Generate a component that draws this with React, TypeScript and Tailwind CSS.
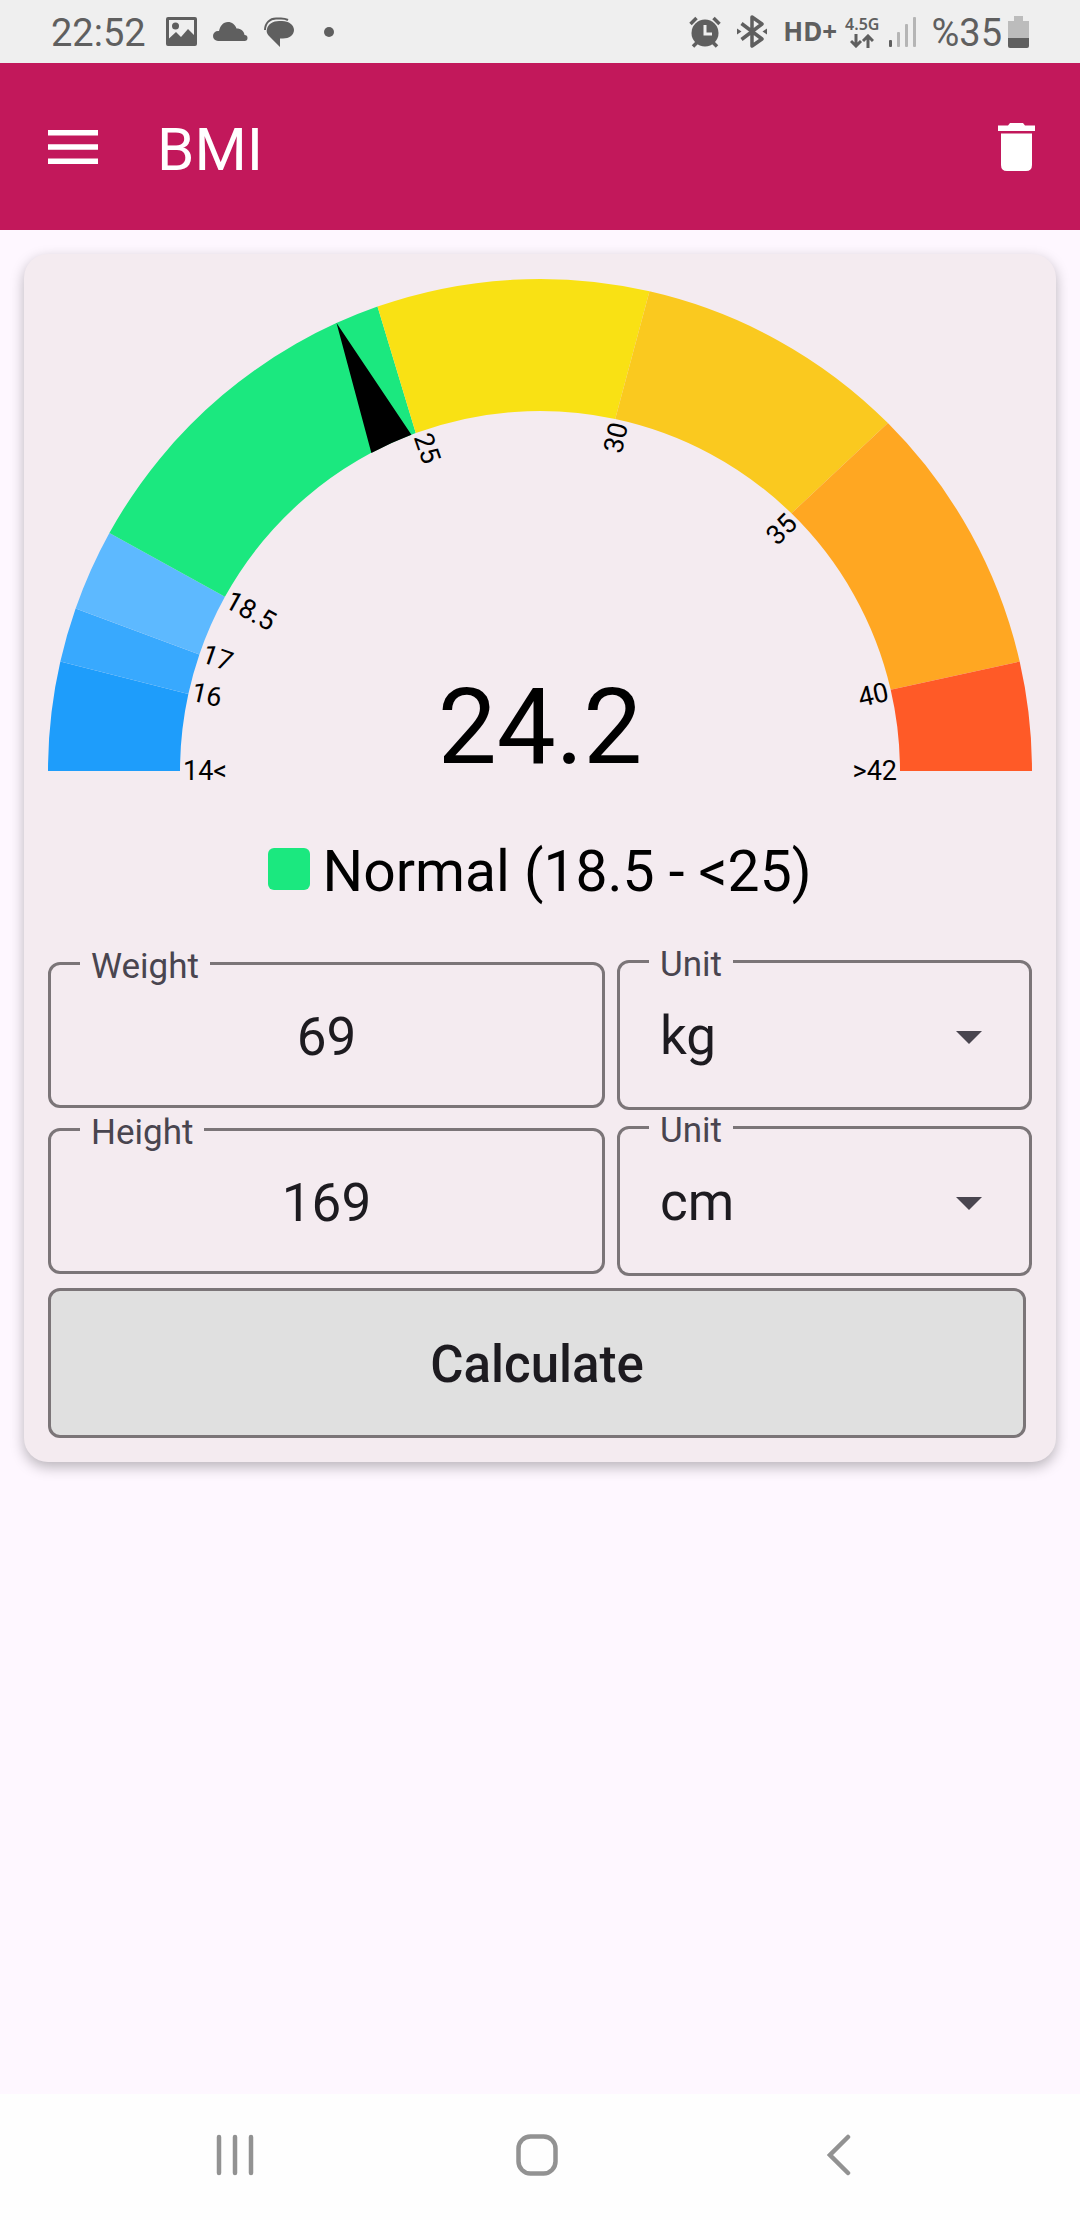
import { useState } from 'react';

// skew: how far the inner end of the segment's closing edge lags behind, in degrees
const segments = [
  { from: 14, to: 16, color: '#1e9dfb', skew: 0.5 },
  { from: 16, to: 17, color: '#38a9fe', skew: 0.4 },
  { from: 17, to: 18.5, color: '#5db9ff', skew: 0 },
  { from: 18.5, to: 25, color: '#1be87f', skew: 0.9 },
  { from: 25, to: 30, color: '#f9e114', skew: 0.8 },
  { from: 30, to: 35, color: '#fac91f', skew: 0.7 },
  { from: 35, to: 40, color: '#ffa722', skew: 0.2 },
  { from: 40, to: 42, color: '#ff5a27', skew: 0 },
];

const ticks = [
  { value: 14, label: '14<' },
  { value: 16, label: '16' },
  { value: 17, label: '17' },
  { value: 18.5, label: '18.5' },
  { value: 25, label: '25' },
  { value: 30, label: '30' },
  { value: 35, label: '35' },
  { value: 40, label: '40' },
  { value: 42, label: '>42' },
];

const CX = 492;
const CY = 493;
const OUTER = 492;
const INNER = 360;

// degrees from the left end of the dial
const toAngle = (bmi: number) => ((bmi - 14) / 28) * 180;

const point = (angle: number, r: number) => {
  const rad = (angle * Math.PI) / 180;
  return `${CX - r * Math.cos(rad)} ${CY - r * Math.sin(rad)}`;
};

const segmentPath = (i: number) => {
  const s = segments[i];
  const a = toAngle(s.from);
  const b = toAngle(s.to);
  const innerA = a - (i > 0 ? segments[i - 1].skew : 0);
  const innerB = b - s.skew;
  return `M${point(a, OUTER)} A${OUTER} ${OUTER} 0 0 1 ${point(b, OUTER)} L${point(innerB, INNER)} A${INNER} ${INNER} 0 0 0 ${point(innerA, INNER)} Z`;
};

function Gauge({ bmi }: { bmi: number }) {
  const needle = toAngle(bmi);

  return (
    <svg viewBox="0 0 984 510" className="block w-full" role="img" aria-label="BMI gauge">
      {segments.map((s, i) => (
        <path key={s.from} d={segmentPath(i)} fill={s.color} />
      ))}
      <path
        d={`M${point(needle, OUTER)} L${point(needle + 3.5, INNER)} A${INNER} ${INNER} 0 0 0 ${point(needle - 3.5, INNER)} Z`}
        fill="#000"
      />
      {ticks.map((tick) => {
        const angle = toAngle(tick.value);
        const left = angle < 90;
        return (
          <text
            key={tick.value}
            x={left ? CX - INNER + 3 : CX + INNER - 3}
            y={CY + 9}
            textAnchor={left ? 'start' : 'end'}
            transform={`rotate(${left ? angle : angle - 180} ${CX} ${CY})`}
            fontSize="27"
          >
            {tick.label}
          </text>
        );
      })}
      <text x={CX} y="485" textAnchor="middle" fontSize="105">
        {bmi.toFixed(1)}
      </text>
    </svg>
  );
}

type NumberFieldProps = {
  id: string;
  label: string;
  value: string;
  onChange: (value: string) => void;
};

function NumberField({ id, label, value, onChange }: NumberFieldProps) {
  return (
    <fieldset className="min-w-0 flex-1 rounded-xl border-3 border-[#7b7578] pb-3">
      <legend className="ml-[29px] px-[11px] pt-1.5 text-[35px] leading-[29px] text-[#49454f]">
        <label htmlFor={id}>{label}</label>
      </legend>
      <input
        id={id}
        type="text"
        inputMode="decimal"
        value={value}
        onChange={(e) => onChange(e.target.value)}
        className="block h-28 w-full bg-transparent text-center text-[53px] text-[#1d1b20] outline-none"
      />
    </fieldset>
  );
}

type UnitSelectProps = {
  id: string;
  value: string;
  options: string[];
  onChange: (value: string) => void;
};

function UnitSelect({ id, value, options, onChange }: UnitSelectProps) {
  return (
    <fieldset className="w-[415px] rounded-xl border-3 border-[#7b7578] pb-3">
      <legend className="ml-[29px] px-[11px] pt-1.5 text-[35px] leading-[29px] text-[#49454f]">
        <label htmlFor={id}>Unit</label>
      </legend>
      <div className="relative">
        <select
          id={id}
          value={value}
          onChange={(e) => onChange(e.target.value)}
          className="block h-[116px] w-full appearance-none bg-transparent pl-10 text-[53px] text-[#1d1b20] outline-none"
        >
          {options.map((option) => (
            <option key={option} value={option}>{option}</option>
          ))}
        </select>
        <div className="pointer-events-none absolute inset-y-0 right-[47px] flex items-center">
          <svg width="26" height="13" viewBox="0 0 26 13" fill="#49454f"><path d="M0 0h26L13 13z" /></svg>
        </div>
      </div>
    </fieldset>
  );
}

function StatusBar() {
  return (
    <div className="flex h-[63px] items-center justify-between bg-[#efefef] px-[51px] text-[38px] text-[#5f5f5f]">
      <div className="flex items-center">
        <span className="pt-1">22:52</span>
        <svg className="ml-5" width="31" height="29" viewBox="0 0 31 29" fill="currentColor">
          <path fillRule="evenodd" d="M2 0h27a2 2 0 0 1 2 2v25a2 2 0 0 1-2 2H2a2 2 0 0 1-2-2V2a2 2 0 0 1 2-2zM3 3v18.500l7-6.500 5 5 7-8 6 6V3z" />
          <circle cx="9.500" cy="9" r="3.500" />
        </svg>
        <svg className="ml-4" width="35" height="19" viewBox="0 0 35 19" fill="currentColor">
          <path d="M5 19a5 5 0 0 1 0-10H6C7 4 10 0 15 0c4 0 7 2.500 8.500 6.500C28 6.500 31 9 31.500 13a3 3 0 0 1 0 6z" />
        </svg>
        <svg className="ml-4" width="30" height="30" viewBox="0 0 30 30" fill="currentColor">
          <path d="M1 13C1 6 6 1.500 12 1.500h5c3 0 5 .5 7 1.500" fill="none" stroke="currentColor" strokeWidth="2" />
          <path d="M15 4h3c7 0 12 4 12 9s-5 8.500-11 8.500h-3V30L6 20c-3-3-4-5-3-8 1-5 6-8 12-8z" />
        </svg>
        <span className="ml-[30px] size-2.5 rounded-full bg-current" />
      </div>

      <div className="flex items-center">
        <svg width="32" height="32" viewBox="0 0 32 32" fill="none" stroke="currentColor">
          <circle cx="16" cy="17" r="13.500" fill="currentColor" stroke="none" />
          <path d="M1.500 8l6-6M30.500 8l-6-6M4 30.500l4-4M28 30.500l-4-4" strokeWidth="3.500" />
          <path d="M16 9v9h7" stroke="#efefef" strokeWidth="3" />
        </svg>
        <svg className="ml-4" width="30" height="33" viewBox="0 0 30 33" fill="none" stroke="currentColor" strokeWidth="3.500" strokeLinejoin="round">
          <path d="M4.500 8.500L25 24l-10 7V2l10 7L4.500 24.500" />
          <path d="M0 13.500l4.500 3-4.500 3zM30 13.500l-4.500 3 4.500 3z" fill="currentColor" stroke="none" />
        </svg>
        <span className="ml-4 font-['Noto_Sans'] text-[26px] font-bold">HD+</span>
        <div className="ml-2 flex flex-col items-center gap-0.5">
          <span className="font-['Noto_Sans'] text-[16px] leading-4 font-semibold">4.5G</span>
          <svg width="24" height="14" viewBox="0 0 24 14" fill="none" stroke="currentColor" strokeWidth="3">
            <path d="M6 0v12M1 7l5 5 5-5M18 14V2M13 7l5-5 5 5" />
          </svg>
        </div>
        <svg className="ml-2.5" width="28" height="30" viewBox="0 0 28 30" fill="#b5b5b5">
          <rect y="23" width="3" height="7" rx="1" fill="#5f5f5f" />
          <rect x="8" y="15" width="3" height="15" rx="1" />
          <rect x="16" y="7" width="3" height="23" rx="1" />
          <rect x="24" width="3" height="30" rx="1" />
        </svg>
        <span className="ml-3.5 pt-1">%35</span>
        <svg className="ml-1.5" width="21" height="32" viewBox="0 0 21 32">
          <path d="M6 0h9v5h6v17H0V5h6z" fill="#bcbcbc" />
          <path d="M0 22h21v8q0 2-2 2H2q-2 0-2-2z" fill="#5f5f5f" />
        </svg>
      </div>
    </div>
  );
}

export default function App() {
  const [weight, setWeight] = useState('69');
  const [height, setHeight] = useState('169');
  const [weightUnit, setWeightUnit] = useState('kg');
  const [heightUnit, setHeightUnit] = useState('cm');
  const [bmi, setBmi] = useState(24.2);

  const calculate = () => {
    const kg = weightUnit === 'kg' ? Number(weight) : Number(weight) * 0.4536;
    const m = heightUnit === 'cm' ? Number(height) / 100 : Number(height) * 0.0254;
    if (kg > 0 && m > 0) setBmi(Math.min(42, Math.max(14, kg / (m * m))));
  };

  return (
    <div className="flex min-h-screen flex-col bg-[#fef7ff] font-[Roboto,sans-serif]">
      <StatusBar />

      <header className="flex h-[167px] items-center bg-[#c2185b] pr-[45px] pl-12 text-white">
        <button type="button" aria-label="Menu">
          <svg width="50" height="34" viewBox="0 0 50 34" fill="currentColor">
            <path d="M0 0h50v5.500H0zM0 14.250h50v5.500H0zM0 28.500h50V34H0z" />
          </svg>
        </button>
        <h1 className="ml-[59px] pt-1.5 text-[60px]">BMI</h1>
        <button type="button" aria-label="Delete" className="ml-auto">
          <svg width="37" height="48" viewBox="0 0 37 48" fill="currentColor">
            <path d="M0 2.500h10L12 0h13l2 2.500h10V8H0zM3 10.500h31V42q0 6-6 6H9q-6 0-6-6z" />
          </svg>
        </button>
      </header>

      <main className="flex-1 px-6 pt-6">
        <section className="rounded-3xl bg-[#f4ebf0] p-6 shadow-[0_5px_14px_rgba(0,0,0,0.28)]">
          <Gauge bmi={bmi} />

          <div className="mt-[50px] flex items-center justify-center gap-3">
            <span className="mb-1.5 size-[42px] rounded-md bg-[#1be87f]" />
            <span className="text-[57px] leading-[68px] text-black">Normal (18.5 - &lt;25)</span>
          </div>

          <div className="mt-[38px] flex items-center gap-3">
            <NumberField id="weight" label="Weight" value={weight} onChange={setWeight} />
            <UnitSelect id="weight-unit" value={weightUnit} options={['kg', 'lb']} onChange={setWeightUnit} />
          </div>
          <div className="flex items-center gap-3">
            <NumberField id="height" label="Height" value={height} onChange={setHeight} />
            <UnitSelect id="height-unit" value={heightUnit} options={['cm', 'in']} onChange={setHeightUnit} />
          </div>

          <div className="mt-3 pr-1.5">
            <button
              type="button"
              onClick={calculate}
              className="h-[150px] w-full rounded-xl border-3 border-[#7b7578] bg-[#e0e0e0] pt-1 text-[51px] font-medium text-[#1d1b20]"
            >
              Calculate
            </button>
          </div>
        </section>
      </main>

      <nav className="flex h-[126px] items-center bg-[#fefefe] pr-[90px] pb-1 pl-[84px] text-[#929292]">
        <button type="button" aria-label="Recent apps" className="flex flex-1 justify-center">
          <svg width="38" height="42" viewBox="0 0 38 42" stroke="currentColor" strokeWidth="4.500" strokeLinecap="round">
            <path d="M3 3v36M19 3v36M35 3v36" />
          </svg>
        </button>
        <button type="button" aria-label="Home" className="flex flex-1 justify-center">
          <svg width="42" height="42" viewBox="0 0 42 42" fill="none" stroke="currentColor" strokeWidth="4.500">
            <rect x="2.500" y="2.500" width="37" height="37" rx="12" />
          </svg>
        </button>
        <button type="button" aria-label="Back" className="flex flex-1 justify-center">
          <svg width="24" height="42" viewBox="0 0 24 42" fill="none" stroke="currentColor" strokeWidth="4.500" strokeLinecap="round">
            <path d="M21 3L3 21l18 18" />
          </svg>
        </button>
      </nav>
    </div>
  );
}
